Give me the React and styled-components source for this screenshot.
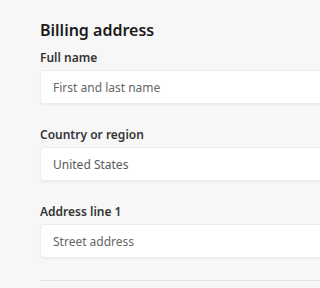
import React from 'react';
import styled, {createGlobalStyle} from "styled-components";

const GlobalStyle = createGlobalStyle`
  html, body {
    margin: 0;
    padding: 0;
    overflow: hidden;
    background-color: #f7f7f7;
  }
  body {
    font-family: "Noto Sans", "Open Sans", sans-serif;
    color: #1a1a1a;
  }
`;

const fields = [
    {label: "Full name", placeholder: "First and last name"},
    {label: "Country or region", value: "United States"},
    {label: "Address line 1", placeholder: "Street address"},
];

const App = () => {
    return (
        <>
            <GlobalStyle />
            <Page>
                <Section>
                    <Title>Billing address</Title>
                    {fields.map((field, index) => (
                        <Field key={field.label} $first={index === 0}>
                            <Label>{field.label}</Label>
                            <Input
                                type="text"
                                placeholder={field.placeholder}
                                defaultValue={field.value}
                            />
                        </Field>
                    ))}
                </Section>
                <Divider />
            </Page>
        </>
    );
};

const Page = styled.div`
  width: 100%;
  height: 288px;
  overflow: hidden;
  padding: 18px 0 0 40px;
  box-sizing: border-box;
`;

const Section = styled.div`
  display: flex;
  flex-direction: column;
  width: calc(100% + 24px);
`;

const Title = styled.h2`
  margin: 0 0 8px;
  font-size: 16px;
  font-weight: 600;
  line-height: 24px;
  color: #1c1c1c;
`;

const Field = styled.div`
  display: flex;
  flex-direction: column;
  gap: 4px;
  margin-top: ${props => props.$first ? "0" : "23px"};
`;

const Label = styled.label`
  font-size: 12px;
  font-weight: 600;
  line-height: 16px;
  color: #353535;
`;

const Input = styled.input`
  height: 34px;
  box-sizing: border-box;
  padding: 0 12px;
  border: 1px solid #ededed;
  border-radius: 4px;
  background: #ffffff;
  box-shadow: 0 1px 2px rgba(0, 0, 0, 0.06);
  font-family: "Noto Sans", "Open Sans", sans-serif;
  font-size: 12px;
  color: #5a5a5a;
  outline: none;

  &::placeholder {
    color: #666666;
    opacity: 1;
  }
`;

const Divider = styled.hr`
  margin: 22px 0 0;
  border: none;
  border-top: 1px solid #e4e4e4;
  width: 100%;
`;

export default App;
